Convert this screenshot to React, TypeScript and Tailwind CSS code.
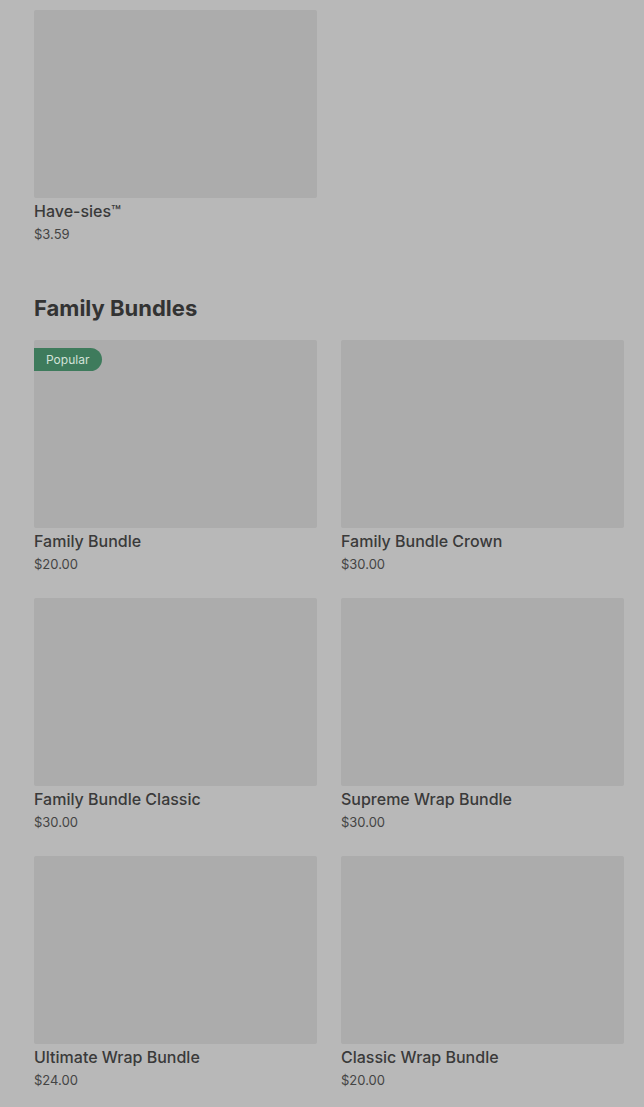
type Item = {
  name: string;
  price: string;
  badge?: string;
};

const topItems: Item[] = [{ name: "Have-sies™", price: "$3.59" }];

const bundles: Item[] = [
  { name: "Family Bundle", price: "$20.00", badge: "Popular" },
  { name: "Family Bundle Crown", price: "$30.00" },
  { name: "Family Bundle Classic", price: "$30.00" },
  { name: "Supreme Wrap Bundle", price: "$30.00" },
  { name: "Ultimate Wrap Bundle", price: "$24.00" },
  { name: "Classic Wrap Bundle", price: "$20.00" },
];

function ItemCard({ item }: { item: Item }) {
  return (
    <div className="flex flex-col">
      <div className="relative h-[188px] rounded-[2px] bg-[#acacac]">
        {item.badge && (
          <span className="absolute left-0 top-[8px] flex h-[23px] items-center rounded-l-[3px] rounded-r-full bg-[#3e7b5c] pl-[12px] pr-[13px] text-[12px] text-[#d3e2d9]">
            {item.badge}
          </span>
        )}
      </div>
      <p className="mt-[1px] text-[16px] leading-[24px] font-medium text-[#3a3a3a]">
        {item.name}
      </p>
      <p className="text-[13px] leading-[22px] text-[#444]">{item.price}</p>
    </div>
  );
}

export default function App() {
  return (
    <div
      className="min-h-screen bg-[#b8b8b8] pl-[34px] pr-[20px] pt-[10px]"
      style={{ fontFamily: "Inter, 'Noto Sans', sans-serif" }}
    >
      {/* Top items */}
      <div className="grid grid-cols-2 gap-x-[24px] gap-y-[23px]">
        {topItems.map((item) => (
          <ItemCard key={item.name} item={item} />
        ))}
      </div>

      {/* Family Bundles */}
      <h2 className="mt-[49px] text-[22px] leading-[28px] font-bold text-[#333]">
        Family Bundles
      </h2>
      <div className="mt-[18px] grid grid-cols-2 gap-x-[24px] gap-y-[23px]">
        {bundles.map((item) => (
          <ItemCard key={item.name} item={item} />
        ))}
      </div>
    </div>
  );
}
